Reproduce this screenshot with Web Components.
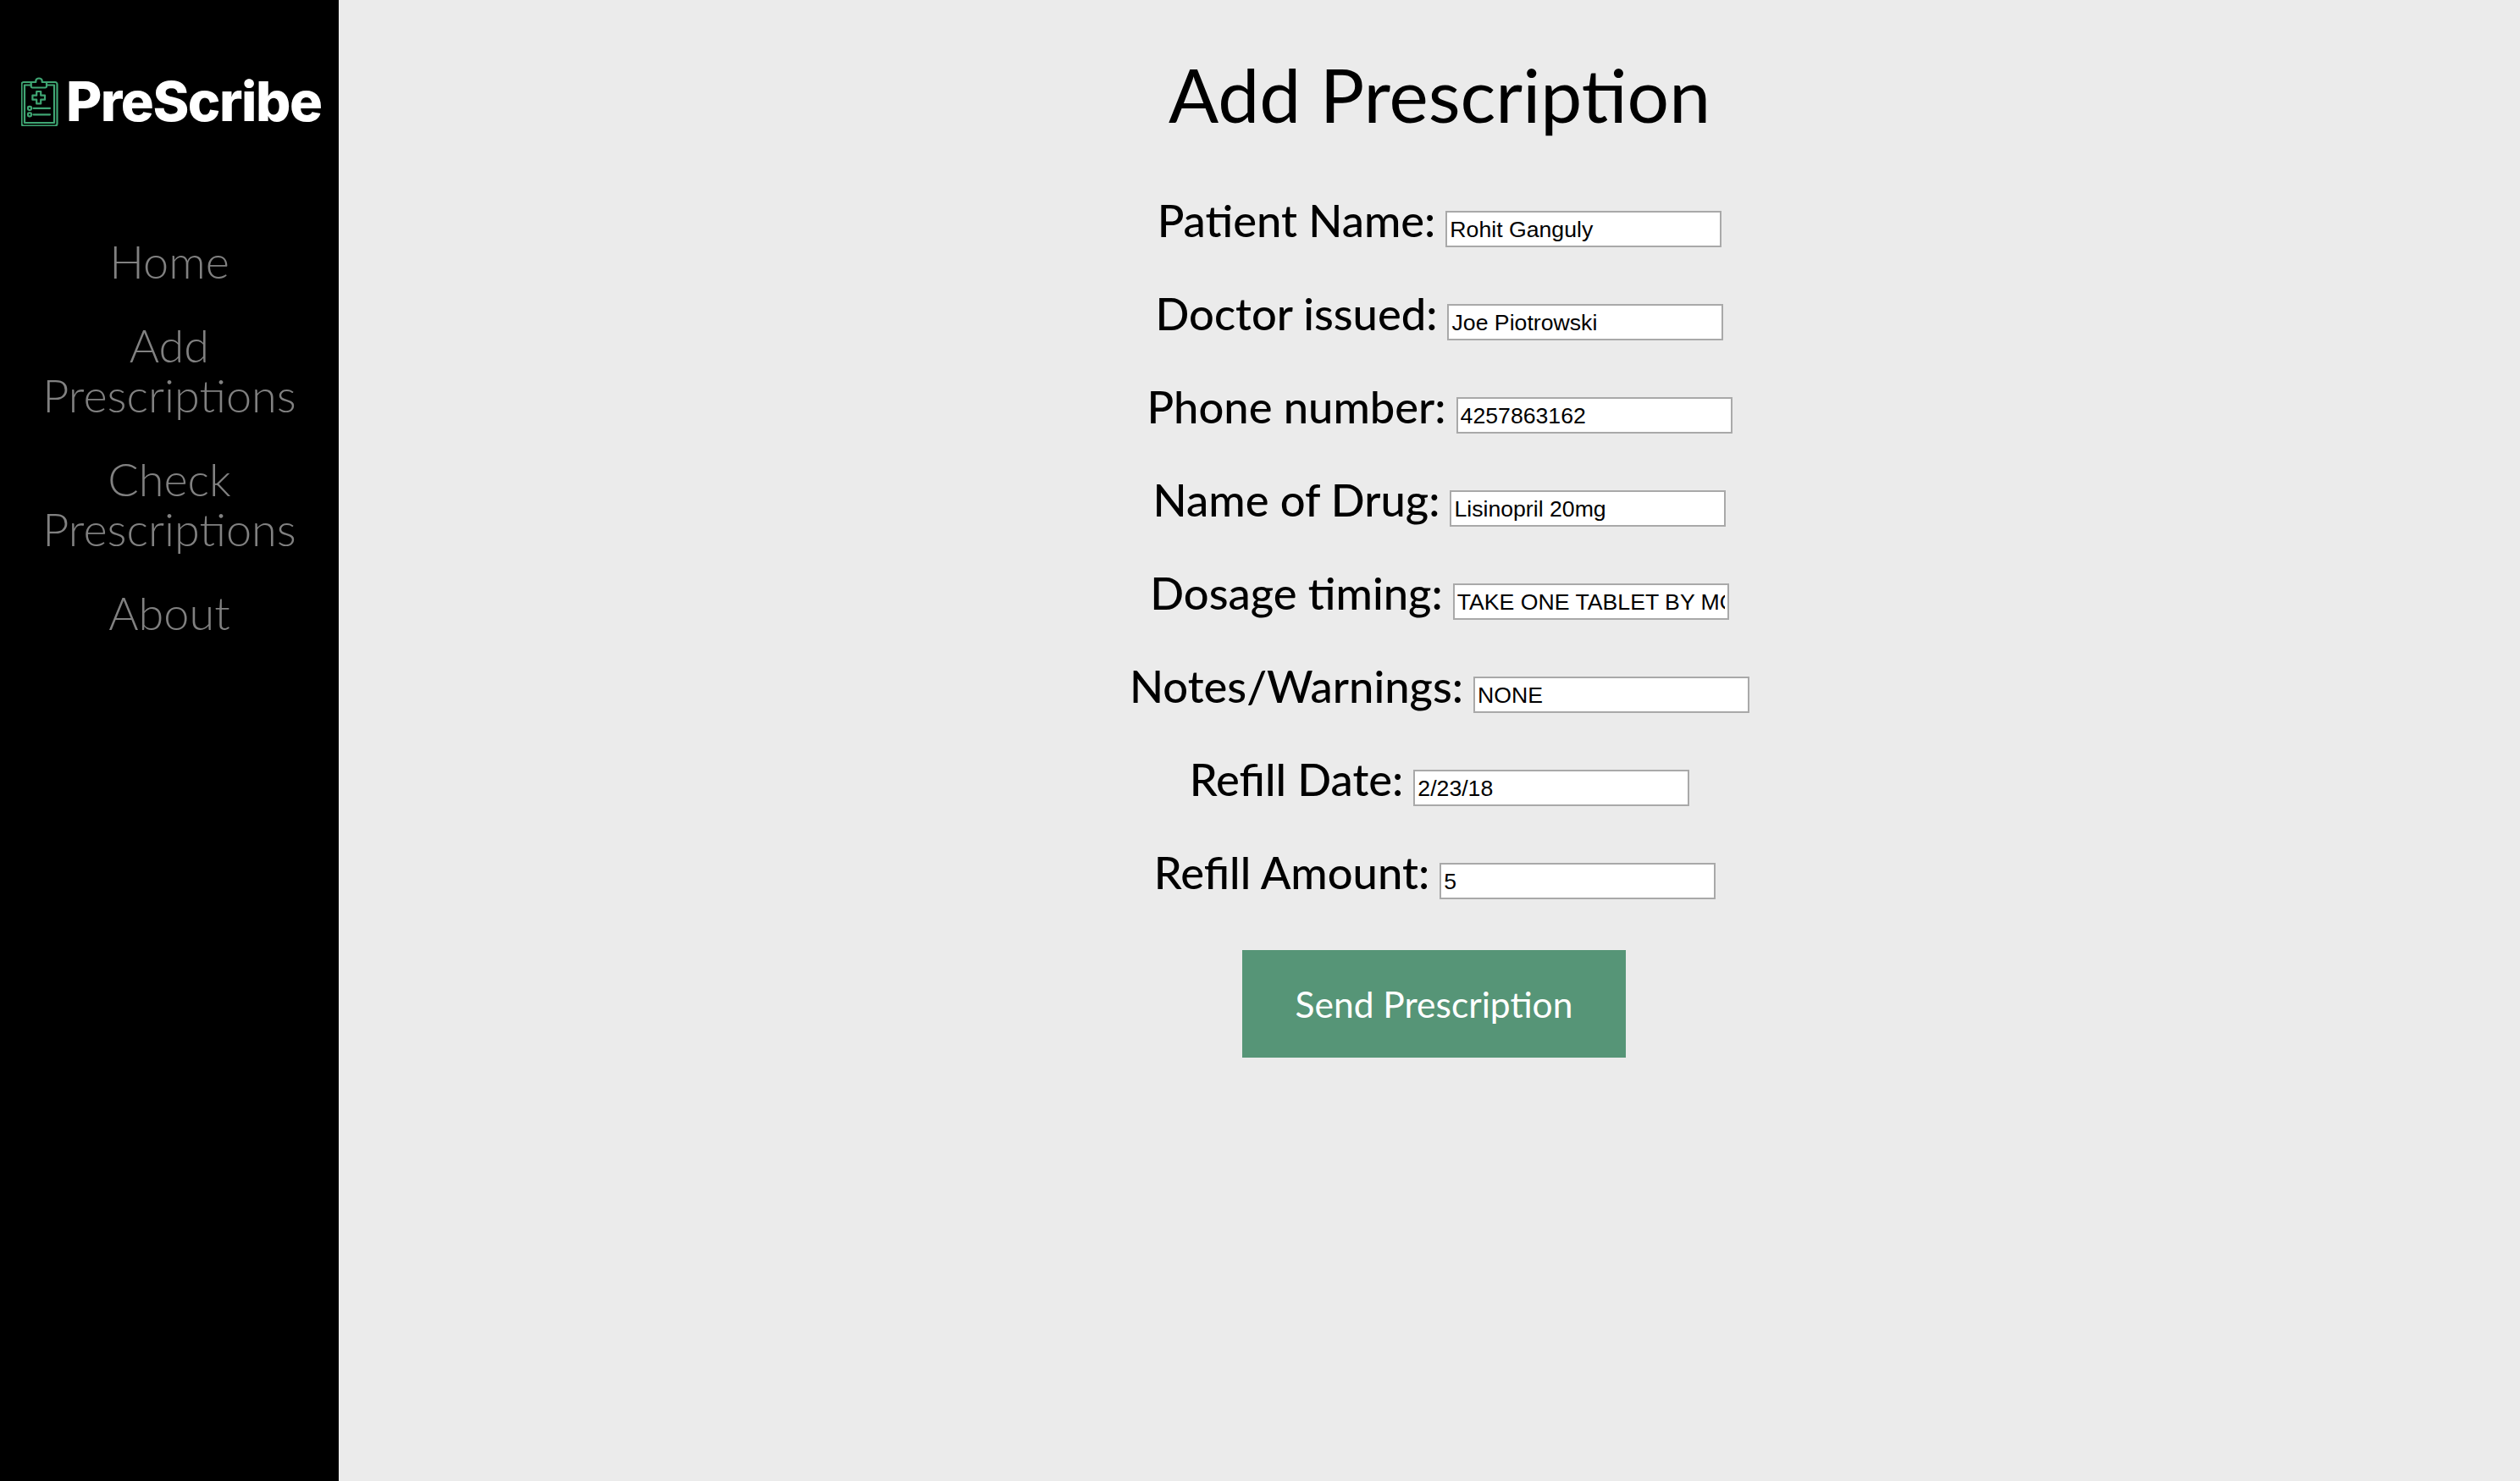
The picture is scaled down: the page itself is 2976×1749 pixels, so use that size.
<!DOCTYPE html>
<html>
<head>
<meta charset="utf-8">
<title>PreScribe</title>
<style>
html, body { margin: 0; height: 100%; }
body { background: #ebebeb; font-family: "Lato", "Liberation Sans", sans-serif; }
</style>
</head>
<body>
<app-shell>
  <side-nav slot="nav">
    <nav-link>Home</nav-link>
    <nav-link>Add Prescriptions</nav-link>
    <nav-link>Check Prescriptions</nav-link>
    <nav-link>About</nav-link>
  </side-nav>
  <rx-form heading="Add Prescription">
    <rx-field label="Patient Name:" value="Rohit Ganguly"></rx-field>
    <rx-field label="Doctor issued:" value="Joe Piotrowski"></rx-field>
    <rx-field label="Phone number:" value="4257863162"></rx-field>
    <rx-field label="Name of Drug:" value="Lisinopril 20mg"></rx-field>
    <rx-field label="Dosage timing:" value="TAKE ONE TABLET BY MOUTH DAILY"></rx-field>
    <rx-field label="Notes/Warnings:" value="NONE"></rx-field>
    <rx-field label="Refill Date:" value="2/23/18"></rx-field>
    <rx-field label="Refill Amount:" value="5" style="margin-right: 11px"></rx-field>
  </rx-form>
</app-shell>

<script>
(function() {

  function define(name, html, init) {
    const template = document.createElement('template');
    template.innerHTML = html;
    customElements.define(name, class extends HTMLElement {
      constructor() {
        super();
        this.attachShadow({mode: 'open'});
        this.shadowRoot.appendChild(template.content.cloneNode(true));
      }
      connectedCallback() {
        if (init) init(this, this.shadowRoot);
      }
    });
  }

  define('app-shell', `
  <style>
:host { display: flex; min-height: 100vh; }
main { flex: 1; min-width: 0; }
  </style>
  <slot name="nav"></slot>
  <main><slot></slot></main>
  `);

  define('side-nav', `
  <style>
:host {
    display: block;
    flex: none;
    width: 400px;
    background: #000;
    box-sizing: border-box;
    padding-top: 88px;
}
.logo {
    display: flex;
    align-items: center;
    gap: 9px;
    padding-left: 25px;
    height: 64px;
    color: #fff;
    font: 800 65px/64px "Inter", "Liberation Sans", sans-serif;
    letter-spacing: -1.500px;
}
.logo svg { flex: none; width: 44px; height: 58px; }
.links { display: flex; flex-direction: column; margin-top: 127px; padding: 0 40px; gap: 40px; }
  </style>
  <div class="logo">
    <svg viewBox="0 0 44 58" fill="none" stroke="#3fa573" stroke-width="2.200" stroke-linejoin="round" stroke-linecap="round">
      <!-- board -->
      <path d="M11.700 6H3a2.500 2.500 0 0 0-2.500 2.500v46.500a2.500 2.500 0 0 0 2.500 2.500h37a2.500 2.500 0 0 0 2.500-2.500V8.500a2.500 2.500 0 0 0-2.500-2.500h-10"/>
      <path d="M11.700 9.500H4V54H39V9.500H30"/>
      <!-- clip -->
      <path d="M11.700 6h5.600V4.500a3.700 3 0 0 1 7.400 0V6H30v5a1.500 1.500 0 0 1-1.500 1.500H13.200A1.500 1.500 0 0 1 11.700 11z"/>
      <!-- cross -->
      <path d="M18.200 17h5v4.700H28v5h-4.800v4.700h-5v-4.700h-4.800v-5h4.800z"/>
      <!-- list -->
      <rect x="8" y="34.800" width="4" height="4" rx="1.200"/>
      <rect x="8" y="42.300" width="4" height="4" rx="1.200"/>
      <path d="M14.500 36.800H34M14.500 44.300H34"/>
    </svg>
    <span>PreScribe</span>
  </div>
  <div class="links"><slot></slot></div>
  `);

  define('nav-link', `
  <style>
:host {
    display: block;
    color: #818181;
    font-size: 54px;
    font-weight: 300;
    line-height: 59px;
    text-align: center;
}
  </style>
  <slot></slot>
  `);

  define('rx-form', `
  <style>
:host {
    display: flex;
    flex-direction: column;
    align-items: center;
    padding-left: 24px;
    color: #000;
}
h1 {
    margin: 59px 0 64px;
    font-size: 87.500px;
    font-weight: 400;
    line-height: 105px;
}
.fields { display: flex; flex-direction: column; align-items: center; gap: 46px; }
button {
    margin: 60px 13px 0 0;
    width: 453px;
    height: 127px;
    border: 0;
    padding: 0;
    background: #569577;
    color: #fff;
    font: 400 42.500px "Lato", "Liberation Sans", sans-serif;
}
  </style>
  <h1></h1>
  <div class="fields"><slot></slot></div>
  <button type="button">Send Prescription</button>
  `, function(el, root) {
    root.querySelector('h1').textContent = el.getAttribute('heading');
  });

  define('rx-field', `
  <style>
:host {
    display: flex;
    align-items: baseline;
    gap: 12px;
    height: 64px;
    font-size: 52.500px;
    font-weight: 500;
    line-height: 64px;
}
input {
    box-sizing: border-box;
    width: 326px;
    height: 43px;
    margin: 0;
    padding: 2px 3px 0;
    border: 2px solid #a9a9a9;
    background: #fff;
    color: #000;
    font: 400 26.670px "Liberation Sans", Arial, sans-serif;
    border-radius: 0;
    outline: none;
}
  </style>
  <label></label>
  <input type="text">
  `, function(el, root) {
    root.querySelector('label').textContent = el.getAttribute('label');
    root.querySelector('input').value = el.getAttribute('value');
  });

}());
</script>
</body>
</html>
